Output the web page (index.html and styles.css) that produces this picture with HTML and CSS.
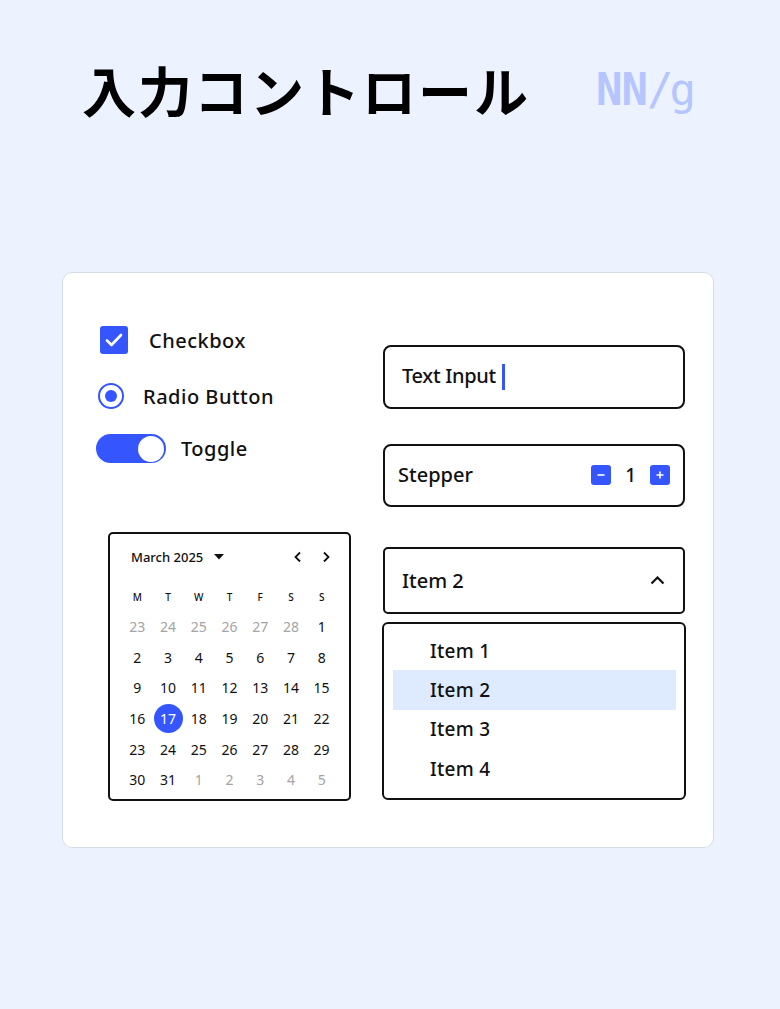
FILE: index.html
```html
<!DOCTYPE html>
<html>
    <head>
        <title>入力コントロール</title>
        <link rel="stylesheet" href="styles.css">
    </head>
    <body>
        <div class="header">
            <h1 class="title">入力コントロール</h1>
            <div class="logo"><span class="logo-nn">NN</span><span class="logo-g">/g</span></div>
        </div>
        <div class="card">
            <div class="col-left">
                <div class="row row-check">
                    <span class="checkbox">
                        <svg width="18" height="14" viewBox="0 0 18 14"><path d="M2 7.5 L6.5 12 L16 2" fill="none" stroke="#fff" stroke-width="2.6" stroke-linecap="round" stroke-linejoin="round"/></svg>
                    </span>
                    <span class="label">Checkbox</span>
                </div>
                <div class="row row-radio">
                    <span class="radio"><span class="radio-dot"></span></span>
                    <span class="label">Radio Button</span>
                </div>
                <div class="row row-toggle">
                    <span class="toggle"><span class="knob"></span></span>
                    <span class="label">Toggle</span>
                </div>
                <div class="calendar">
                    <div class="cal-head">
                        <span class="cal-month">March 2025</span>
                        <svg class="cal-caret" width="10" height="6" viewBox="0 0 10 6"><path d="M0 0 H10 L5 5.5 Z" fill="#111"/></svg>
                        <span class="cal-nav">
                            <svg width="10" height="12" viewBox="0 0 10 12"><path d="M7 1.5 L2.5 6 L7 10.5" fill="none" stroke="#111" stroke-width="1.8"/></svg>
                            <svg width="10" height="12" viewBox="0 0 10 12"><path d="M3 1.5 L7.5 6 L3 10.5" fill="none" stroke="#111" stroke-width="1.8"/></svg>
                        </span>
                    </div>
                    <div class="cal-grid">
                        <span class="wd">M</span><span class="wd">T</span><span class="wd">W</span><span class="wd">T</span><span class="wd">F</span><span class="wd">S</span><span class="wd">S</span>
                        <span class="day muted">23</span><span class="day muted">24</span><span class="day muted">25</span><span class="day muted">26</span><span class="day muted">27</span><span class="day muted">28</span><span class="day">1</span>
                        <span class="day">2</span><span class="day">3</span><span class="day">4</span><span class="day">5</span><span class="day">6</span><span class="day">7</span><span class="day">8</span>
                        <span class="day">9</span><span class="day">10</span><span class="day">11</span><span class="day">12</span><span class="day">13</span><span class="day">14</span><span class="day">15</span>
                        <span class="day">16</span><span class="day"><span class="selected">17</span></span><span class="day">18</span><span class="day">19</span><span class="day">20</span><span class="day">21</span><span class="day">22</span>
                        <span class="day">23</span><span class="day">24</span><span class="day">25</span><span class="day">26</span><span class="day">27</span><span class="day">28</span><span class="day">29</span>
                        <span class="day">30</span><span class="day">31</span><span class="day muted">1</span><span class="day muted">2</span><span class="day muted">3</span><span class="day muted">4</span><span class="day muted">5</span>
                    </div>
                </div>
            </div>
            <div class="col-right">
                <div class="field text-input">
                    <span class="label">Text Input</span><span class="cursor"></span>
                </div>
                <div class="field stepper">
                    <span class="label">Stepper</span>
                    <span class="step-controls">
                        <span class="step-btn">
                            <svg width="10" height="10" viewBox="0 0 10 10"><path d="M1.5 5 H8.5" stroke="#fff" stroke-width="1.6"/></svg>
                        </span>
                        <span class="step-value">1</span>
                        <span class="step-btn">
                            <svg width="10" height="10" viewBox="0 0 10 10"><path d="M1.5 5 H8.5 M5 1.5 V8.5" stroke="#fff" stroke-width="1.6"/></svg>
                        </span>
                    </span>
                </div>
                <div class="field dropdown">
                    <span class="label">Item 2</span>
                    <svg width="15" height="9" viewBox="0 0 15 9"><path d="M1.5 7.5 L7.5 1.5 L13.5 7.5" fill="none" stroke="#111" stroke-width="2.2"/></svg>
                </div>
                <div class="listbox">
                    <div class="item">Item 1</div>
                    <div class="item active">Item 2</div>
                    <div class="item">Item 3</div>
                    <div class="item">Item 4</div>
                </div>
            </div>
        </div>
    </body>
</html>
```
FILE: styles.css
```css
*{
    margin: 0;
    box-sizing: border-box;
}
html{
    background-color: #edf3fe;
}
body{
    font-family: "Noto Sans", "Noto Sans CJK JP", sans-serif;
    color: #111;
}
.header{
    display: flex;
    align-items: center;
    justify-content: space-between;
    height: 64px;
    margin-top: 58px;
    padding: 0 88px 0 82px;
}
.title{
    font-family: "Noto Sans CJK JP", sans-serif;
    font-size: 54px;
    font-weight: 700;
    line-height: 64px;
    letter-spacing: 2px;
    color: #000;
}
.logo{
    color: #b4c5ff;
    font-family: "DejaVu Sans Mono", monospace;
    font-size: 44px;
    line-height: 64px;
}
.logo-nn{
    font-weight: 700;
    letter-spacing: -1px;
}
.logo-g{
    letter-spacing: -4px;
}
.card{
    display: flex;
    gap: 32px;
    width: 652px;
    height: 576px;
    margin: 150px 0 0 62px;
    padding: 0 28px 0 33px;
    background: #fff;
    border: 1px solid #d6dce7;
    border-radius: 10px;
}
.col-left{
    width: 255px;
    padding-top: 53px;
}
.row{
    display: flex;
    align-items: center;
}
.label{
    font-size: 20px;
    font-weight: 500;
}
.col-left .label{
    letter-spacing: 0.5px;
}
.row-check{
    height: 28px;
    gap: 21px;
}
.checkbox{
    display: flex;
    align-items: center;
    justify-content: center;
    width: 28px;
    height: 28px;
    margin-left: 4px;
    background: #3556ff;
    border-radius: 3px;
}
.row-radio{
    height: 28px;
    margin-top: 28px;
    gap: 19px;
}
.radio{
    display: flex;
    align-items: center;
    justify-content: center;
    width: 26px;
    height: 26px;
    margin-left: 2px;
    border: 2.5px solid #3556ff;
    border-radius: 50%;
}
.radio-dot{
    width: 12px;
    height: 12px;
    background: #3556ff;
    border-radius: 50%;
}
.row-toggle{
    height: 29px;
    margin-top: 24px;
    gap: 15px;
}
.toggle{
    display: flex;
    justify-content: flex-end;
    align-items: center;
    width: 70px;
    height: 29px;
    padding: 0 2px;
    background: #3556ff;
    border-radius: 15px;
}
.knob{
    width: 26px;
    height: 26px;
    background: #fff;
    border-radius: 50%;
}
.calendar{
    width: 243px;
    height: 269px;
    margin: 69px 0 0 12px;
    padding: 12px 12px 0;
    border: 2px solid #111;
    border-radius: 5px;
}
.cal-head{
    display: flex;
    align-items: center;
    height: 22px;
    padding-left: 9px;
}
.cal-month{
    font-size: 13px;
    font-weight: 500;
}
.cal-caret{
    margin-left: 11px;
}
.cal-nav{
    display: flex;
    gap: 18px;
    margin-left: auto;
    margin-right: 6px;
}
.cal-grid{
    display: grid;
    grid-template-columns: repeat(7, 1fr);
    grid-template-rows: 28px repeat(6, 30.7px);
    margin-top: 15px;
}
.wd{
    display: flex;
    align-items: center;
    justify-content: center;
    font-size: 10px;
    font-weight: 500;
}
.day{
    display: flex;
    align-items: center;
    justify-content: center;
    font-size: 14px;
}
.muted{
    color: #a4a4a4;
}
.selected{
    display: flex;
    align-items: center;
    justify-content: center;
    width: 29px;
    height: 29px;
    color: #fff;
    background: #3556ff;
    border-radius: 50%;
}
.col-right{
    width: 302px;
    padding-top: 72px;
}
.field{
    display: flex;
    align-items: center;
    border: 2px solid #111;
    border-radius: 8px;
}
.text-input{
    height: 64px;
    padding: 0 0 3px 17px;
}
.text-input .label{
    letter-spacing: -0.3px;
}
.cursor{
    width: 3px;
    height: 26px;
    margin: 3px 0 0 6px;
    background: #3556ff;
}
.stepper{
    justify-content: space-between;
    height: 63px;
    margin-top: 35px;
    padding: 0 13px 2px;
}
.step-controls{
    display: flex;
    align-items: center;
    gap: 14px;
}
.step-btn{
    display: flex;
    align-items: center;
    justify-content: center;
    width: 20px;
    height: 20px;
    background: #3556ff;
    border-radius: 3px;
}
.step-value{
    font-size: 19px;
    font-weight: 500;
}
.dropdown{
    justify-content: space-between;
    height: 67px;
    margin-top: 40px;
    padding: 0 18px 0 17px;
    border-radius: 5px;
}
.listbox{
    height: 178px;
    margin: 8px -1px 0;
    padding: 7px 8px 0 9px;
    border: 2px solid #111;
    border-radius: 6px;
}
.item{
    display: flex;
    align-items: center;
    height: 39.3px;
    padding-left: 37px;
    font-size: 19px;
    font-weight: 500;
    letter-spacing: 0.3px;
}
.item.active{
    background: #deeafd;
}
```
